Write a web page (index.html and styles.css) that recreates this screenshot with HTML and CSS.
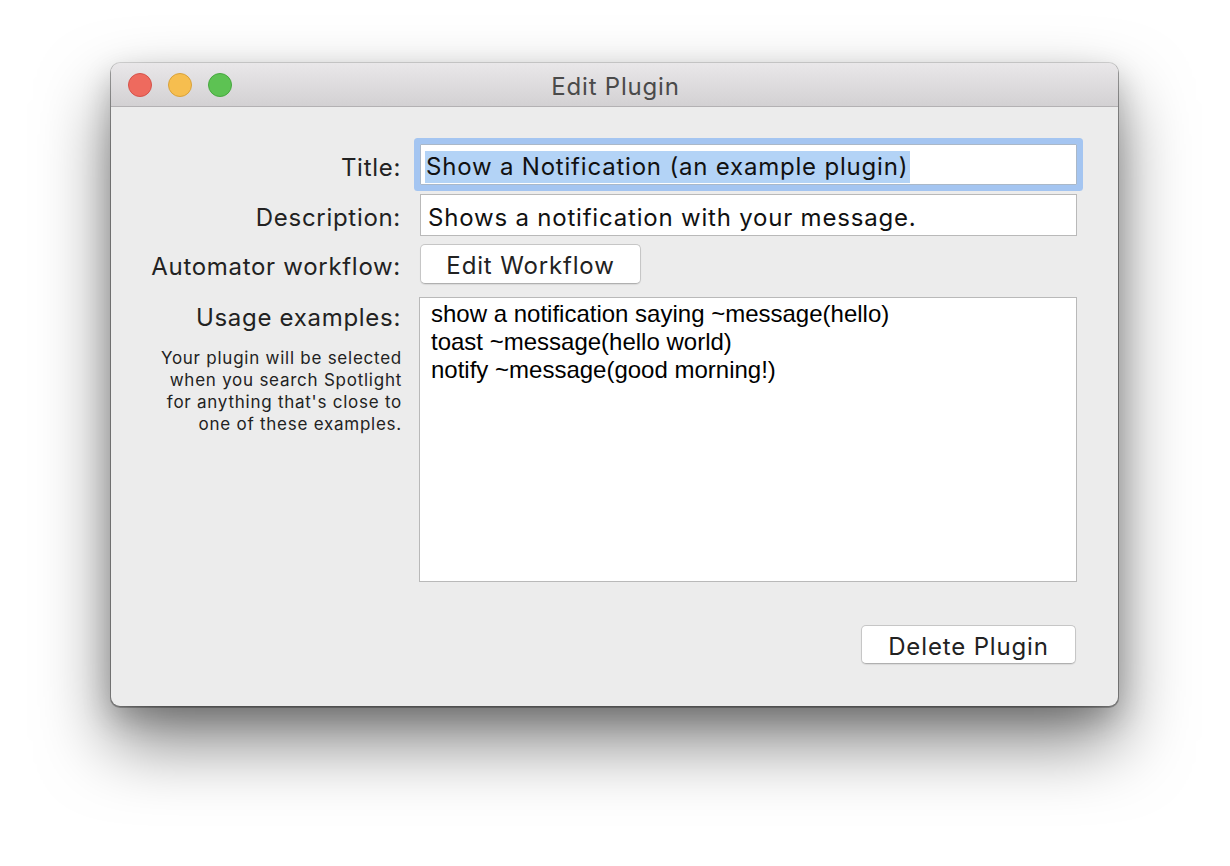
FILE: index.html
```html
<!DOCTYPE html>
<html>
<head>
<meta charset="utf-8">
<link rel="stylesheet" href="styles.css">
</head>
<body>
<div class="window">
  <div class="titlebar">
    <div class="lights">
      <span class="light red"></span>
      <span class="light yellow"></span>
      <span class="light green"></span>
    </div>
    <div class="title">Edit Plugin</div>
  </div>
  <div class="content">
    <div class="row row-title">
      <div class="label">Title:</div>
      <div class="field focused"><span class="sel">Show a Notification (an example plugin)</span></div>
    </div>
    <div class="row row-desc">
      <div class="label">Description:</div>
      <div class="field">Shows a notification with your message.</div>
    </div>
    <div class="row row-wf">
      <div class="label">Automator workflow:</div>
      <div><button class="btn btn-wf">Edit Workflow</button></div>
    </div>
    <div class="row row-usage">
      <div class="label-col">
        <div class="label">Usage examples:</div>
        <div class="help">Your plugin will be selected<br>when you search Spotlight<br>for anything that's close to<br>one of these examples.</div>
      </div>
      <div class="textarea">show a notification saying ~message(hello)<br>toast ~message(hello world)<br>notify ~message(good morning!)</div>
    </div>
    <div class="footer">
      <button class="btn btn-del">Delete Plugin</button>
    </div>
  </div>
</div>
</body>
</html>
```

FILE: styles.css
```css
html, body {
  margin: 0;
  padding: 0;
  background: #ffffff;
  width: 1230px;
  height: 866px;
  overflow: hidden;
}
body {
  font-family: "Inter", "Noto Sans", sans-serif;
  color: #222222;
}
.window {
  margin: 63px 0 0 111px;
  width: 1007px;
  height: 643px;
  border-radius: 9px;
  background: #ececec;
  box-shadow: 0 0 0 1px rgba(0,0,0,0.14), 0 1px 0 1px rgba(0,0,0,0.25), 0 36px 70px rgba(0,0,0,0.5), 0 12px 30px rgba(0,0,0,0.2);
  overflow: hidden;
  display: flex;
  flex-direction: column;
}
.titlebar {
  height: 43px;
  flex: none;
  background: linear-gradient(#e9e7e9, #d3d1d3);
  border-bottom: 1px solid #b3b1b3;
  display: flex;
  align-items: center;
  position: relative;
}
.lights {
  display: flex;
  gap: 16px;
  padding-left: 17px;
  padding-top: 1px;
}
.light {
  width: 24px;
  height: 24px;
  border-radius: 50%;
  box-sizing: border-box;
}
.red { background: #ee6a5e; border: 1px solid #d5524a; }
.yellow { background: #f6be4f; border: 1px solid #d9a23a; }
.green { background: #5dc253; border: 1px solid #47a83f; }
.title {
  position: absolute;
  left: 0;
  right: 0;
  top: 0;
  bottom: 0;
  display: flex;
  align-items: center;
  justify-content: center;
  font-size: 24px;
  letter-spacing: 0.8px;
  color: #4a4a4a;
  padding-top: 4px;
  padding-left: 2px;
}
.content {
  flex: 1;
  display: flex;
  flex-direction: column;
  padding: 37px 41px 0 0;
}
.row {
  display: grid;
  grid-template-columns: 290px 657px;
  column-gap: 19px;
  align-items: center;
}
.label {
  text-align: right;
  font-size: 24px;
  letter-spacing: 0.7px;
  color: #222;
  padding-top: 5px;
}
.field {
  box-sizing: border-box;
  background: #fff;
  border: 1px solid #b9b9b9;
  font-size: 24px;
  letter-spacing: 0.8px;
  color: #111;
  padding-left: 7px;
  padding-top: 5px;
  display: flex;
  align-items: center;
  white-space: nowrap;
}
.row-title .field {
  height: 41px;
  border-radius: 1px;
  box-shadow: 0 0 0 6px #a4c5f1;
  border-color: #aab8c8;
}
.sel {
  background: #b3d3f6;
  padding: 1px 2px 2px 1px;
  margin-left: -3px;
}
.row-desc { margin-top: 9px; }
.row-desc .field { height: 42px; }
.row-wf { margin-top: 8px; }
.btn {
  font-family: "Inter", "Noto Sans", sans-serif;
  font-size: 24px;
  letter-spacing: 0.85px;
  color: #222;
  background: #fff;
  border: 1px solid #c6c6c6;
  border-bottom-color: #b0b0b0;
  border-radius: 5px;
  box-shadow: 0 1px 1px rgba(0,0,0,0.08);
  padding: 3px 0 0 0;
  display: flex;
  align-items: center;
  justify-content: center;
}
.btn-wf {
  width: 221px;
  height: 40px;
}
.row-usage {
  margin-top: 13px;
  align-items: start;
}
.label-col {
  display: flex;
  flex-direction: column;
  align-items: flex-end;
}
.row-usage .label {
  margin-top: 2px;
  line-height: 28px;
}
.help {
  margin-top: 15px;
  font-size: 17px;
  letter-spacing: 0.75px;
  line-height: 22px;
  text-align: right;
  white-space: nowrap;
  margin-right: -1px;
  color: #222;
}
.textarea {
  box-sizing: border-box;
  height: 285px;
  background: #fff;
  border: 1px solid #b9b9b9;
  margin-left: -1px;
  font-family: "Liberation Sans", Arial, sans-serif;
  font-size: 24px;
  line-height: 28px;
  color: #000;
  padding: 2px 0 0 11px;
}
.footer {
  display: flex;
  justify-content: flex-end;
  margin-top: 43px;
  padding-right: 1px;
}
.btn-del {
  width: 215px;
  height: 39px;
}
```
